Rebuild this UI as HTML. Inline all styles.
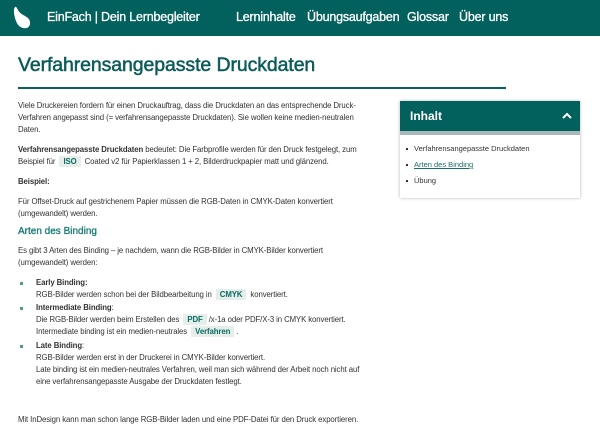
<!DOCTYPE html>
<html><head><meta charset="utf-8"><style>
*{margin:0;padding:0;box-sizing:border-box}
body{width:600px;height:434px;overflow:hidden;background:#fff;font-family:"Liberation Sans",sans-serif;color:#222;position:relative}
.hdr{position:absolute;left:0;top:0;width:600px;height:36px;background:#02605d;color:#fff}
.hdr .brand{position:absolute;left:47px;top:10px;font-size:12.5px;-webkit-text-stroke:0.3px #fff;letter-spacing:-0.2px}
.hdr .nav{position:absolute;top:10px;font-size:12.5px;-webkit-text-stroke:0.3px #fff;letter-spacing:-0.2px}
h1{position:absolute;left:18px;top:54px;font-size:19.5px;color:#0b5c59;font-weight:normal;-webkit-text-stroke:0.5px #0b5c59;letter-spacing:-0.1px}
.rule{position:absolute;left:18px;top:87px;width:488px;height:2px;background:#0e5f5c}
.t{position:absolute;left:18px;font-size:7.8px;line-height:12px;letter-spacing:-0.1px;white-space:nowrap;color:#333}
.c{background:#e6eeec;color:#0b6b60;font-weight:bold;padding:1px 4px;margin:0 2px}
h2{position:absolute;left:18px;top:226px;font-size:10px;color:#177b73;font-weight:normal;-webkit-text-stroke:0.3px #177b73}
.b{position:absolute;left:20px;width:3px;height:3px;background:#4e9b8c}
.side{position:absolute;left:400px;top:101px;width:180px;height:97px;box-shadow:0 0 3px rgba(0,0,0,.3);background:#fff}
.side .sh{background:#02605d;color:#fff;font-size:12px;font-weight:bold;padding:8px 0 0 10px;border-bottom:4px solid #a9b9b9;height:34px}
.side .li{position:absolute;left:14px;font-size:7.5px;color:#333}
.side .li:before{content:"";position:absolute;left:-8px;top:4px;width:2px;height:2px;background:#333}
</style></head><body>
<div class="hdr">
<svg style="position:absolute;left:12px;top:6px" width="20" height="24" viewBox="0 0 20 24"><path d="M3 1 C1 3 2 10 4 15 C6 21 11 23 15 22 C19 20 19 15 16 12 C12 9 8 8 6 4 C5 2 4 0 3 1Z" fill="#fff"/></svg>
<div class="brand">EinFach | Dein Lernbegleiter</div>
<div class="nav" style="left:236px">Lerninhalte</div>
<div class="nav" style="left:307px">Übungsaufgaben</div>
<div class="nav" style="left:407px">Glossar</div>
<div class="nav" style="left:459px">Über uns</div>
</div>
<h1>Verfahrensangepasste Druckdaten</h1>
<div class="rule"></div>
<div class="t" style="top:100px">Viele Druckereien fordern für einen Druckauftrag, dass die Druckdaten an das entsprechende Druck-<br>Verfahren angepasst sind (= verfahrensangepasste Druckdaten). Sie wollen keine medien-neutralen<br>Daten.</div>
<div class="t" style="top:144px"><b>Verfahrensangepasste Druckdaten</b> bedeutet: Die Farbprofile werden für den Druck festgelegt, zum<br>Beispiel für <span class="c">ISO</span> Coated v2 für Papierklassen 1 + 2, Bilderdruckpapier matt und glänzend.</div>
<div class="t" style="top:176px"><b>Beispiel:</b></div>
<div class="t" style="top:196px">Für Offset-Druck auf gestrichenem Papier müssen die RGB-Daten in CMYK-Daten konvertiert<br>(umgewandelt) werden.</div>
<h2>Arten des Binding</h2>
<div class="t" style="top:245px">Es gibt 3 Arten des Binding – je nachdem, wann die RGB-Bilder in CMYK-Bilder konvertiert<br>(umgewandelt) werden:</div>
<div class="b" style="top:282px"></div>
<div class="t" style="left:36px;top:277px"><b>Early Binding:</b><br>RGB-Bilder werden schon bei der Bildbearbeitung in <span class="c">CMYK</span> konvertiert.</div>
<div class="b" style="top:307px"></div>
<div class="t" style="left:36px;top:302px"><b>Intermediate Binding</b>:<br>Die RGB-Bilder werden beim Erstellen des <span class="c">PDF</span>/x-1a oder PDF/X-3 in CMYK konvertiert.<br>Intermediate binding ist ein medien-neutrales <span class="c">Verfahren</span>.</div>
<div class="b" style="top:345px"></div>
<div class="t" style="left:36px;top:340px"><b>Late Binding</b>:<br>RGB-Bilder werden erst in der Druckerei in CMYK-Bilder konvertiert.<br>Late binding ist ein medien-neutrales Verfahren, weil man sich während der Arbeit noch nicht auf<br>eine verfahrensangepasste Ausgabe der Druckdaten festlegt.</div>
<div class="t" style="top:414px">Mit InDesign kann man schon lange RGB-Bilder laden und eine PDF-Datei für den Druck exportieren.</div>
<div class="side">
<div class="sh">Inhalt<svg style="position:absolute;right:8px;top:11px" width="10" height="7" viewBox="0 0 10 7"><path d="M1 6 L5 2 L9 6" stroke="#fff" stroke-width="2" fill="none"/></svg></div>
<div class="li" style="top:43px">Verfahrensangepasste Druckdaten</div>
<div class="li" style="top:59px;color:#1a6e66;text-decoration:underline">Arten des Binding</div>
<div class="li" style="top:75px">Übung</div>
</div>
</body></html>
